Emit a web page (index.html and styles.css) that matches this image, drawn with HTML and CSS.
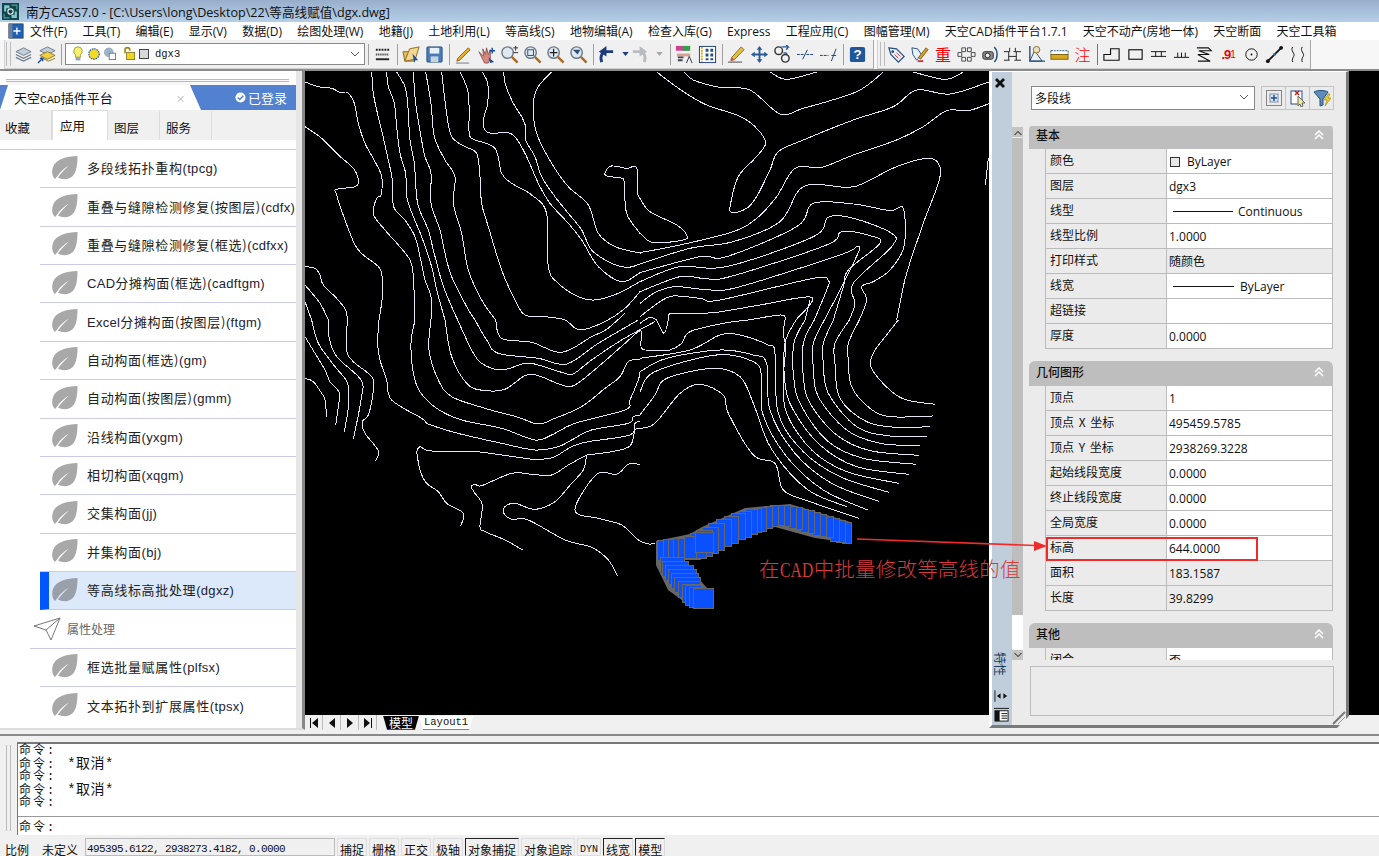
FILE: index.html
```html
<!DOCTYPE html>
<html lang="zh">
<head>
<meta charset="utf-8">
<title>南方CASS7.0</title>
<link rel="stylesheet" href="styles.css">
</head>
<body>
<svg class="defs" width="0" height="0">
  <symbol id="leaf" viewBox="0 0 28 28"><path d="M26.500 1C15 1.500 5 4 2 12c-2 6 0 10 2 12l2.500-3C9 17 13 13.500 18 10.500 14 14 10 18 7 22.500c5 3 13 2 16-3 3-5 3.500-12 3.500-18.500z" fill="currentColor"/></symbol>
  <symbol id="mag" viewBox="0 0 20 20"><circle cx="8" cy="8" r="6" fill="#dfe7f0" stroke="#6a7a8a" stroke-width="1.500"/><path d="M12.500 12.500l6 6" stroke="#a86a20" stroke-width="2.500"/></symbol>
</svg>

<header class="titlebar">
  <svg class="app-logo" viewBox="0 0 16 16"><rect width="16" height="16" fill="#12444c"/><path d="M2 2h5v3H4v3H2zM14 14H9v-3h3V8h2z" fill="#7fc8c8"/><circle cx="8" cy="8" r="2.500" fill="none" stroke="#e8f4f4"/><path d="M9 2h5v4M2 10v4h5" stroke="#4fa0a0" fill="none"/></svg>
  <span>南方CASS7.0 - [C:\Users\long\Desktop\22\等高线赋值\dgx.dwg]</span>
</header>

<nav class="menubar">
  <svg class="menu-logo" viewBox="0 0 18 18"><rect x="1" y="1" width="16" height="16" fill="#1c63b8" stroke="#30455c"/><path d="M10 5v8M6 9h8" stroke="#fff" stroke-width="1.500"/><rect x="1" y="1" width="4" height="16" fill="#6d7f94"/></svg>
  <span>文件(F)</span><span>工具(T)</span><span>编辑(E)</span><span>显示(V)</span><span>数据(D)</span><span>绘图处理(W)</span><span>地籍(J)</span><span>土地利用(L)</span><span>等高线(S)</span><span>地物编辑(A)</span><span>检查入库(G)</span><span>Express</span><span>工程应用(C)</span><span>图幅管理(M)</span><span>天空CAD插件平台1.7.1</span><span>天空不动产(房地一体)</span><span>天空断面</span><span>天空工具箱</span>
</nav>

<div class="toolrow">
  <div class="tb tb-one">
    <i class="grip"></i>
    <b class="ic"><svg viewBox="0 0 20 20"><path d="M10 3l8 4-8 4-8-4z" fill="#c4ced8" stroke="#6c7c8c"/><path d="M2 10l8 4 8-4M2 13l8 4 8-4" fill="none" stroke="#6c7c8c" stroke-width="1.300"/></svg></b>
    <b class="ic"><svg viewBox="0 0 20 20"><path d="M11 2l8 4-8 4-8-4z" fill="#c4ced8" stroke="#6c7c8c"/><path d="M11 7l8 4-8 4-8-4z" fill="#f2d040" stroke="#8c7820"/><path d="M4 13l8 4 7-3" fill="none" stroke="#8c7820"/><path d="M1 19l5-5M3 14h3v3" stroke="#1c4c9c" fill="none" stroke-width="1.400"/></svg></b>
    <i class="sep"></i>
    <div class="layer-combo">
      <svg class="lc" viewBox="0 0 16 20"><path d="M8 1a5.500 5.500 0 0 0-3 10v3h6v-3A5.500 5.500 0 0 0 8 1z" fill="#f8f070" stroke="#8a8a40"/><rect x="5" y="14" width="6" height="4" fill="#9aa4b0"/></svg>
      <svg class="lc" viewBox="0 0 16 20"><circle cx="8" cy="10" r="6.500" fill="#f6d820" stroke="#1c50a8" stroke-width="1.400" stroke-dasharray="2 1"/></svg>
      <svg class="lc" viewBox="0 0 16 20"><circle cx="6.500" cy="8" r="5.500" fill="#9fb4cc" stroke="#7c8ca0" stroke-dasharray="2 1"/><rect x="7" y="9" width="8" height="8" fill="#fff" stroke="#5c6c7c"/></svg>
      <svg class="lc lc-lock" viewBox="0 0 16 20"><path d="M3 9V5a3 3 0 0 1 6 0v1" fill="none" stroke="#a08810" stroke-width="2"/><rect x="5" y="8" width="10" height="9" fill="#f0d820" stroke="#80701c"/></svg>
      <i class="swatch"></i>
      <span class="lc-name">dgx3</span>
      <svg class="chev" viewBox="0 0 10 6"><path d="M1 1l4 4 4-4" fill="none" stroke="#555"/></svg>
    </div>
    <i class="sep"></i>
    <b class="ic"><svg viewBox="0 0 20 20"><path d="M3 5h14" stroke="#222" stroke-dasharray="2 1" stroke-width="2"/><path d="M3 10h14" stroke="#222" stroke-dasharray="1 1" stroke-width="2"/><path d="M3 15h14" stroke="#222" stroke-width="2"/></svg></b>
    <i class="sep"></i>
    <b class="ic"><svg viewBox="0 0 20 20"><path d="M1 7h6l2-2h4v12H3z" fill="#e4bc60" stroke="#8c6c20"/><path d="M3 17L8 4l10-2-4 13z" fill="#f0d890" stroke="#8c6c20"/><path d="M11 9l6 7-3 0-1 3z" fill="#1c4c9c"/></svg></b>
    <b class="ic"><svg viewBox="0 0 20 20"><rect x="2" y="2" width="16" height="16" rx="1" fill="#4a7cb8" stroke="#27517f"/><rect x="5" y="3" width="10" height="6" fill="#e8f0f8"/><rect x="6" y="12" width="8" height="6" fill="#c8d4e0"/></svg></b>
    <i class="sep"></i>
    <b class="ic"><svg viewBox="0 0 20 20"><path d="M4 14L15 3l2 2L6 16l-3 1z" fill="#f0b020" stroke="#8c6010"/><path d="M2 19h14" stroke="#777"/></svg></b>
    <b class="ic"><svg viewBox="0 0 20 20"><path d="M2 7l5 5-1-8 3 6 1-7 2 7 2-5 0 9-2 5H8z" fill="#d88880" stroke="#8c5c58"/><path d="M12 13l6 5-4 1z" fill="#1c4c9c"/><path d="M16 3v6M13 6h6" stroke="#1c4c9c" stroke-width="1.500"/></svg></b>
    <b class="ic"><svg viewBox="0 0 20 20"><use href="#mag"/><path d="M14 3h5M16.500 1v5M14 8h5" stroke="#333"/></svg></b>
    <b class="ic"><svg viewBox="0 0 20 20"><use href="#mag"/><rect x="5" y="5" width="6" height="6" fill="none" stroke="#27517f"/></svg></b>
    <b class="ic"><svg viewBox="0 0 20 20"><use href="#mag"/><path d="M8 4v8M4 8h8" stroke="#222" stroke-width="1.300"/></svg></b>
    <b class="ic"><svg viewBox="0 0 20 20"><use href="#mag"/><path d="M4 5h8l-3 5-2-2z" fill="#27517f"/></svg></b>
    <i class="sep"></i>
    <b class="ic ic-undo"><svg viewBox="0 0 20 20"><path d="M6 18c-2-6 0-11 6-11h6" fill="none" stroke="#1c3c7c" stroke-width="3"/><path d="M11 1L3 7l8 5z" fill="#1c3c7c"/></svg></b>
    <b class="mini mini-a"><svg viewBox="0 0 8 5"><path d="M0 0h8L4 5z" fill="#1c3c7c"/></svg></b>
    <b class="ic"><svg viewBox="0 0 20 20"><path d="M14 18c2-6 0-11-6-11H2" fill="none" stroke="#b8bcc0" stroke-width="3"/><path d="M9 1l8 6-8 5z" fill="#b8bcc0"/></svg></b>
    <b class="mini mini-b"><svg viewBox="0 0 8 5"><path d="M0 0h8L4 5z" fill="#a8a8a8"/></svg></b>
    <i class="sep"></i>
    <b class="ic"><svg viewBox="0 0 20 20"><rect x="1" y="1" width="14" height="5" fill="#d04090"/><rect x="8" y="1" width="8" height="5" fill="#30a050"/><path d="M2 9h14v3H2z" fill="#d8a090"/><path d="M3 13h6M3 16h5" stroke="#445" stroke-width="2"/><path d="M12 19l3-7 3 7" fill="none" stroke="#334"/></svg></b>
    <b class="ic"><svg viewBox="0 0 20 20"><rect x="1.500" y="1.500" width="17" height="17" fill="#fff" stroke="#1c3c7c"/><path d="M4 2v16" stroke="#d8a820" stroke-width="2" stroke-dasharray="2 1"/><path d="M8 4h3v3H8zM13 4h3v3h-3zM8 9h3v3H8zM13 9h3v3h-3zM8 14h3v2H8zM13 14h3v2h-3z" fill="#27517f"/></svg></b>
    <i class="sep"></i>
    <b class="ic"><svg viewBox="0 0 20 20"><path d="M5 13L15 2l3 3L8 15l-4 1z" fill="#e8c040" stroke="#7c6c20"/><path d="M5 13l3 3-4 1z" fill="#d05050"/><path d="M1 18h15" stroke="#444"/></svg></b>
    <b class="ic"><svg viewBox="0 0 20 20"><path d="M10 1l3 4h-2v4h4V7l4 3-4 3v-2h-4v4h2l-3 4-3-4h2v-4H5v2l-4-3 4-3v2h4V5H7z" fill="#2a5c9c"/></svg></b>
    <b class="ic"><svg viewBox="0 0 20 20"><circle cx="6" cy="6" r="4" fill="none" stroke="#333" stroke-width="1.500"/><circle cx="13" cy="14" r="4" fill="none" stroke="#333" stroke-width="1.500"/><path d="M9 2h7l-2-2m2 2l-2 3M11 8l4 1" stroke="#2a5c9c" fill="none" stroke-width="1.500"/></svg></b>
    <b class="ic"><svg viewBox="0 0 20 20"><path d="M1 10h7M11 10h8" stroke="#1c3c7c" stroke-dasharray="3 1"/><path d="M7 15l5-10" stroke="#1c3c7c"/></svg></b>
    <b class="ic"><svg viewBox="0 0 20 20"><path d="M1 11h9" stroke="#1c3c7c" stroke-dasharray="3 1"/><path d="M13 11h5M13 17l5-13" stroke="#1c3c7c"/></svg></b>
    <i class="sep"></i>
    <b class="ic"><svg viewBox="0 0 20 20"><rect x="2" y="2" width="16" height="16" rx="2" fill="#20579c"/><text class="qm" x="10" y="15">?</text></svg></b>
  </div>
  <div class="tb tb-two">
    <i class="grip grip-wide"></i>
    <b class="ic"><svg viewBox="0 0 20 20"><path d="M2 3l8 1 8 8-6 6-8-8z" fill="#e8f0f8" stroke="#27517f" stroke-width="1.300"/><circle cx="6" cy="7" r="1.500" fill="#27517f"/><path d="M8 10l4 4M10 8l4 4" stroke="#c04040"/></svg></b>
    <b class="ic"><svg viewBox="0 0 20 20"><path d="M2 3l6 1 4 6-5 6-4-6z" fill="#e8f0f8" stroke="#27517f"/><path d="M9 13l8-10 2 2-8 10z" fill="#d8a030" stroke="#7c6010"/><path d="M8 17h6" stroke="#c04040" stroke-width="2"/></svg></b>
    <b class="ic ic-red">重</b>
    <b class="ic"><svg viewBox="0 0 20 20"><path d="M5 3h4v4H5zM11 3h4v4h-4zM1 8h4v4H1zM15 8h4v4h-4zM5 13h4v4H5zM11 13h4v4h-4z" fill="#f4f4f4" stroke="#444"/></svg></b>
    <b class="ic"><svg viewBox="0 0 20 20"><rect x="3" y="7" width="11" height="8" rx="2" fill="#888" stroke="#333"/><circle cx="8" cy="11" r="2.500" fill="#eee" stroke="#222"/><path d="M15 2c4 4 4 12 0 16" fill="none" stroke="#27517f" stroke-width="1.500"/></svg></b>
    <b class="ic"><svg viewBox="0 0 20 20"><path d="M1 7h6M11 7h8M6 7v9M14 7v9M6 12h8M1 16h6M12 16h7M7 3v4M13 3v4" stroke="#222" fill="none"/></svg></b>
    <b class="ic"><svg viewBox="0 0 20 20"><path d="M3 1v16h16" fill="none" stroke="#27517f" stroke-width="1.500"/><path d="M3 17L16 17 8 6z" fill="none" stroke="#27517f"/><circle cx="10" cy="5" r="3.500" fill="#e8e0c0" stroke="#8a6c30"/></svg></b>
    <b class="ic"><svg viewBox="0 0 20 20"><rect x="1" y="6" width="18" height="4" fill="#fff" stroke="#27517f" stroke-dasharray="2 1"/><rect x="1" y="10" width="18" height="5" fill="#d8a820" stroke="#7c6010"/></svg></b>
    <b class="ic ic-red ic-thin">注</b>
    <i class="sep sep-dark"></i>
    <b class="ic"><svg viewBox="0 0 20 20"><path d="M2 16V10h7V4h9v12z" fill="none" stroke="#111" stroke-width="1.200"/></svg></b>
    <b class="ic"><svg viewBox="0 0 20 20"><rect x="3" y="5" width="14" height="10" fill="none" stroke="#111" stroke-width="1.200"/></svg></b>
    <b class="ic"><svg viewBox="0 0 20 20"><path d="M2 7h16M2 12h16M7 7v5M13 7v5" stroke="#111" fill="none"/></svg></b>
    <b class="ic"><svg viewBox="0 0 20 20"><path d="M2 13h16M6 8v5M10 8v5M14 8v5" stroke="#111" fill="none"/></svg></b>
    <b class="ic"><svg viewBox="0 0 20 20"><path d="M2 3h12l3 3H4l11 4H3l13 7H3" stroke="#111" fill="none" stroke-width="1.200"/></svg></b>
    <b class="ic ic-num">.9<small>1</small></b>
    <b class="ic"><svg viewBox="0 0 20 20"><circle cx="10" cy="10" r="6" fill="none" stroke="#111"/><circle cx="10" cy="10" r="1" fill="#111"/></svg></b>
    <b class="ic"><svg viewBox="0 0 20 20"><path d="M3 17L17 3" stroke="#111" stroke-width="2"/><circle cx="3" cy="17" r="2" fill="#111"/><circle cx="17" cy="3" r="2" fill="#111"/><circle cx="10" cy="10" r="1.500" fill="#2a6ca8"/></svg></b>
    <b class="ic"><svg viewBox="0 0 20 20"><path d="M5 2C2 6 8 9 6 12c-1 2-2 3-1 6M15 2c-3 4 3 7 1 10-1 2-2 3-1 6" fill="none" stroke="#111"/></svg></b>
  </div>
</div>

<main class="workspace">
  <aside class="plugin">
    <div class="plugin-grip"></div>
    <div class="plugin-head">
      <div class="plugin-tab"><span class="pt-name">天空<em>CAD</em>插件平台</span><span class="pt-x">✕</span></div>
      <div class="logged"><svg viewBox="0 0 12 12"><circle cx="6" cy="6" r="5.500" fill="#fff"/><path d="M3 6l2.200 2.200L9 4.200" fill="none" stroke="#5181cf" stroke-width="1.600"/></svg>已登录</div>
    </div>
    <div class="plugin-tabs"><span>收藏</span><span class="on">应用</span><span>图层</span><span>服务</span></div>
    <ul class="tools">
      <li class="tool"><svg class="leaf"><use href="#leaf"/></svg><span>多段线拓扑重构<u>(tpcg)</u></span></li>
      <li class="tool"><svg class="leaf"><use href="#leaf"/></svg><span>重叠与缝隙检测修复(按图层)<u>(cdfx)</u></span></li>
      <li class="tool"><svg class="leaf"><use href="#leaf"/></svg><span>重叠与缝隙检测修复(框选)<u>(cdfxx)</u></span></li>
      <li class="tool"><svg class="leaf"><use href="#leaf"/></svg><span><u>CAD</u>分摊构面(框选)<u>(cadftgm)</u></span></li>
      <li class="tool"><svg class="leaf"><use href="#leaf"/></svg><span><u>Excel</u>分摊构面(按图层)<u>(ftgm)</u></span></li>
      <li class="tool"><svg class="leaf"><use href="#leaf"/></svg><span>自动构面(框选)<u>(gm)</u></span></li>
      <li class="tool"><svg class="leaf"><use href="#leaf"/></svg><span>自动构面(按图层)<u>(gmm)</u></span></li>
      <li class="tool"><svg class="leaf"><use href="#leaf"/></svg><span>沿线构面<u>(yxgm)</u></span></li>
      <li class="tool"><svg class="leaf"><use href="#leaf"/></svg><span>相切构面<u>(xqgm)</u></span></li>
      <li class="tool"><svg class="leaf"><use href="#leaf"/></svg><span>交集构面<u>(jj)</u></span></li>
      <li class="tool"><svg class="leaf"><use href="#leaf"/></svg><span>并集构面<u>(bj)</u></span></li>
      <li class="tool tool-on"><svg class="leaf"><use href="#leaf"/></svg><span>等高线标高批处理<u>(dgxz)</u></span></li>
      <li class="group"><svg class="plane" viewBox="0 0 28 24"><path d="M1 9L27 1 18 23 13 13zM13 13L27 1" fill="none" stroke="#777"/></svg><span>属性处理</span></li>
      <li class="tool"><svg class="leaf"><use href="#leaf"/></svg><span>框选批量赋属性<u>(plfsx)</u></span></li>
      <li class="tool tool-last"><svg class="leaf"><use href="#leaf"/></svg><span>文本拓扑到扩展属性<u>(tpsx)</u></span></li>
    </ul>
  </aside>

  <section class="drawing">
    <div class="canvas">
      <svg class="contours" viewBox="305 71 1074 644" width="1074" height="644">
        <g class="q8" transform="translate(305 70) scale(.3333)">
          <polyline points="0,36 40,50 80,55 105,67 128,68 148,100 160,160 180,220 210,275 230,320 228,375 215,385 205,432 240,480 280,525 315,570 325,620 330,750"/>
          <polyline points="0,170 50,205 100,255 145,295 160,330 150,350 95,358 95,375 120,450 150,525 175,555 215,585 230,610 232,680 222,750"/>
          <polyline points="0,590 30,595 45,615 55,645 95,685 122,720 127,750"/>
          <polyline points="0,645 45,700 70,750"/>
          <polyline points="0,695 20,750"/>
          <polyline points="200,6 205,70 215,120 232,190 250,270 262,330 266,410 300,450 330,500 345,560 360,630 378,680 378,750"/>
          <polyline points="245,6 250,50 268,100 275,170 285,250 302,310 305,380 325,440 350,500 380,590 395,660 420,750"/>
          <polyline points="275,6 300,50 308,100 315,210 328,280 338,400 370,480 385,540 412,640 440,710 458,750"/>
          <polyline points="325,6 332,100 348,200 360,260 378,310 378,400 405,480 420,550 440,620 485,710 510,750"/>
          <polyline points="362,6 378,100 388,200 420,270 450,320 445,400 470,490 490,600 530,690 572,750"/>
          <polyline points="410,6 425,130 440,200 480,230 515,250 525,320 530,400 550,470 590,600 630,690 660,735 720,740 780,750 825,780 900,755 960,715 1005,665"/>
          <polyline points="465,6 490,70 492,180 495,200 510,210 570,235 590,310 620,340 680,375 725,430 730,590 760,640 820,680 870,690 940,670 1005,635"/>
          <polyline points="532,6 548,40 548,100 535,150 540,180 560,190 620,192 660,250 700,340 735,400 790,460 830,510 880,590 950,635 1005,608"/>
          <polyline points="597,6 600,40 625,100 650,140 662,170 662,210 690,260 710,320 750,380 790,430 830,480 860,540 920,580 970,592 1005,582"/>
          <polyline points="740,6 700,50 685,100 695,190 740,280 790,350 850,405 880,490 930,530 1000,548 1005,548"/>
          <polyline points="1005,490 965,430 958,340 950,325 905,318 902,305 920,288 965,295 995,293 998,370 1005,385"/>
        </g>
        <g class="q9" transform="translate(640 70) scale(.3333)">
          <polyline points="50,6 130,65 200,105 290,135 340,165 375,210 370,235 340,270 295,320 272,400 275,428 320,415 350,380 390,300 415,245 490,210 640,150 760,110 830,60 930,72 1050,35 1100,20"/>
          <polyline points="133,6 160,30 240,52 330,60 420,132 490,115 650,65 730,6"/>
          <polyline points="390,6 440,28 530,6"/>
          <polyline points="820,6 915,28 970,6"/>
          <polyline points="0,385 30,425 110,465 140,495 130,510 40,518 0,490"/>
          <polyline points="0,548 120,525 280,485 350,445 410,380 465,295 545,292 640,255 770,210 850,170 920,122 985,122 1050,100"/>
          <polyline points="0,582 150,535 280,515 420,455 490,350 620,352 670,340 770,290 860,265 895,280 898,330 850,460 800,610 780,700 770,750"/>
          <polyline points="0,608 180,560 260,560 470,470 520,400 640,402 750,422 790,415 792,530 750,600 700,635 665,650 680,690 658,750"/>
          <polyline points="0,635 120,590 260,590 520,500 565,442 640,445 755,490 755,530 640,640 645,700 628,750"/>
          <polyline points="0,665 120,620 190,625 270,620 560,525 605,485 690,497 720,520 625,600 610,650 580,750"/>
          <polyline points="0,700 50,665 110,650 210,660 300,650 600,555 650,530 658,540 620,620 590,680 553,750"/>
          <polyline points="0,740 60,695 100,678 180,685 240,690 520,625 565,632 560,660 523,750"/>
          <polyline points="85,750 85,740 100,730 220,728 360,705 515,682 468,750"/>
          <polyline points="510,690 495,750"/>
          <polyline points="0,760 30,742 50,750"/>
          <polyline points="325,750 420,735 437,745 435,750"/>
          <polyline points="1045,265 1036,345"/>
        </g>
        <g class="q10" transform="translate(305 320) scale(.3333)">
          <polyline points="0,50 30,100 60,150 75,185 103,218 100,260 92,315"/>
          <polyline points="20,0 40,70 90,140 128,190 130,260 118,335"/>
          <polyline points="70,0 72,50 95,110 168,180 168,240 145,358"/>
          <polyline points="127,0 125,90 145,125 200,170 205,210 190,285 172,305 180,340 220,392 212,422"/>
          <polyline points="0,175 25,185 50,220 60,240 65,290"/>
          <polyline points="222,0 218,70 225,120 245,180 260,240 350,295 370,312 440,335 500,350 590,370 690,390 760,380 800,360 860,330 970,310 985,290 1005,285"/>
          <polyline points="330,0 318,70 325,160 345,215 395,265 470,300 590,325 690,360 740,345 810,310 960,270 975,240 1000,180 1005,155"/>
          <polyline points="378,0 372,90 400,180 440,230 540,265 640,292 700,312 750,295 830,260 900,205 945,170 970,125 1005,117"/>
          <polyline points="420,0 440,110 490,195 545,212 600,208 660,167 700,167 770,195 810,195 880,140 960,70 1000,35 1010,40 1010,85 1050,92"/>
          <polyline points="458,0 500,90 530,130 590,150 660,130 700,135 780,160 805,162 860,120 950,60 1050,5"/>
          <polyline points="510,0 545,60 580,100 700,115 785,132 880,70 1000,0"/>
          <polyline points="572,0 590,55 680,67 770,97 860,50 905,28 960,-20"/>
          <polyline points="335,395 345,380 370,392 440,395 515,395 640,412 690,418 745,412 800,380 850,365 975,345 990,310 1005,305"/>
          <polyline points="335,395 345,450 365,490 400,515 425,550 475,580 467,618"/>
          <polyline points="845,405 920,395 975,378 990,330 1005,325"/>
          <polyline points="845,405 835,450 800,490 750,545 690,568 630,550 600,560 597,580 620,598 670,600 780,660 860,682 910,720 937,767"/>
          <polyline points="497,500 510,492 530,497 620,460 680,463 740,465 790,435 845,405"/>
          <polyline points="497,500 510,520 532,555 525,620 540,635 600,660 653,690"/>
          <polyline points="1005,433 970,433 935,463 875,463 810,570 880,595 950,615 1000,660 1030,672 1050,670"/>
        </g>
        <g class="q11" transform="translate(640 320) scale(.3333)">
          <polyline points="50,0 72,40 85,0"/>
          <polyline points="45,92 90,90 125,70 150,35 250,10 325,0"/>
          <polyline points="775,0 740,45 700,100 697,150 780,232 885,253"/>
          <polyline points="658,0 625,70 625,120 635,200 690,265 750,290 878,288"/>
          <polyline points="628,0 585,70 585,130 600,235 680,305 770,322 870,320"/>
          <polyline points="580,0 550,70 550,130 565,220 650,320 750,348 860,350"/>
          <polyline points="553,0 520,70 520,140 535,230 620,330 720,370 840,377"/>
          <polyline points="523,0 490,70 490,170 510,250 590,345 690,392 836,406"/>
          <polyline points="495,0 462,70 462,180 485,260 565,365 670,415 828,433"/>
          <polyline points="468,0 435,70 435,190 460,270 540,375 650,440 806,463"/>
          <polyline points="435,0 430,40 437,85 430,180 440,280 515,390 620,455 776,490"/>
          <polyline points="0,115 150,90 240,45 300,45 385,75 405,100 415,280 490,395 600,470 746,517"/>
          <polyline points="0,155 80,115 240,90 340,105 380,130 390,270 465,400 575,490 716,544"/>
          <polyline points="0,215 45,155 230,105 340,125 365,170 368,280 440,410 550,510 683,570"/>
          <polyline points="0,285 45,225 80,175 220,145 300,170 340,250 385,370 450,460 520,520 620,560"/>
          <polyline points="0,325 45,310 120,220 180,193 250,225 265,280 340,405 405,430 430,510 510,545 657,595"/>
        </g>
        <polygon class="band-shadow" points="656,541 690,534 702,527 745,508 790,504 850,522 850,543 815,538 775,527 745,536 715,552 700,560 680,560 700,580 714,596 714,608 690,606 668,590 656,565"/>
        <g class="band">
          <rect x="842" y="522" width="9" height="21"/><rect x="836" y="520" width="9" height="22"/><rect x="830" y="518" width="9" height="23"/><rect x="824" y="516" width="9" height="21"/><rect x="818" y="514" width="8" height="22"/><rect x="812" y="512" width="8" height="23"/><rect x="806" y="510" width="8" height="23"/><rect x="800" y="509" width="8" height="23"/><rect x="794" y="507" width="8" height="22"/><rect x="788" y="506" width="8" height="22"/><rect x="782" y="505" width="8" height="21"/><rect x="776" y="505" width="8" height="20"/><rect x="770" y="505" width="8" height="21"/><rect x="764" y="506" width="8" height="22"/><rect x="758" y="507" width="8" height="24"/><rect x="752" y="508" width="9" height="24"/><rect x="745" y="509" width="12" height="25"/><rect x="738" y="511" width="13" height="26"/><rect x="731" y="513" width="14" height="26"/><rect x="724" y="516" width="14" height="27"/><rect x="716" y="519" width="15" height="27"/><rect x="708" y="523" width="16" height="27"/><rect x="702" y="527" width="16" height="26"/><rect x="696" y="530" width="16" height="26"/><rect x="690" y="533" width="16" height="25"/>
          <rect x="657" y="540" width="10" height="20"/><rect x="663" y="539" width="10" height="22"/><rect x="668" y="539" width="10" height="22"/><rect x="673" y="538" width="10" height="21"/><rect x="678" y="538" width="10" height="20"/><rect x="684" y="536" width="12" height="22"/>
          <rect x="695" y="532" width="18" height="20"/>
          <rect x="660" y="557" width="24" height="16"/><rect x="662" y="561" width="26" height="15"/><rect x="665" y="565" width="28" height="15"/><rect x="668" y="569" width="28" height="15"/><rect x="671" y="573" width="27" height="15"/><rect x="674" y="577" width="26" height="15"/><rect x="678" y="581" width="22" height="16"/><rect x="682" y="584" width="18" height="18"/><rect x="685" y="585" width="16" height="20"/><rect x="689" y="587" width="14" height="20"/>
          <rect x="693" y="588" width="20" height="20"/>
        </g>
      </svg>
    </div>
    <div class="layout-tabs">
      <div class="nav-btns">
        <b><svg viewBox="0 0 8 10"><path d="M0 0h1v10H0zM8 0v10L2 5z"/></svg></b>
        <b><svg viewBox="0 0 8 10"><path d="M7 0v10L1 5z"/></svg></b>
        <b><svg viewBox="0 0 8 10"><path d="M1 0v10l6-5z"/></svg></b>
        <b><svg viewBox="0 0 8 10"><path d="M7 0h1v10H7zM0 0v10l6-5z"/></svg></b>
      </div>
      <span class="ltab ltab-on">模型</span><span class="ltab">Layout1</span>
    </div>

    <aside class="props">
      <div class="props-strip">
        <svg class="px" viewBox="0 0 12 12"><path d="M1 3L3 1l3 3 3-3 2 2-3 3 3 3-2 2-3-3-3 3-2-2 3-3z" fill="#111"/></svg>
        <span class="strip-title">特性</span>
        <svg class="si si-a" viewBox="0 0 16 12"><path d="M1 0v12" stroke="#111"/><path d="M7 3v6L3 6zM10 3v6l4-3z" fill="#111"/></svg>
        <svg class="si si-b" viewBox="0 0 16 14"><path d="M0 .5h16" stroke="#111"/><rect x="1" y="3" width="14" height="11" fill="#fff" stroke="#111"/><rect x="1" y="3" width="5" height="11" fill="#111"/><path d="M8 6h6M8 8.500h6M8 11h6" stroke="#111"/></svg>
      </div>
      <div class="props-body">
        <div class="props-top">
          <div class="type-combo"><span>多段线</span><svg class="chev" viewBox="0 0 10 6"><path d="M1 1l4 4 4-4" fill="none" stroke="#555"/></svg></div>
          <div class="top-btns">
            <b><svg viewBox="0 0 18 18"><rect x="1.500" y="1.500" width="15" height="15" fill="none" stroke="#222" stroke-dasharray="1 1"/><rect x="5" y="5" width="8" height="8" fill="#dfe9f6" stroke="#7a8ea6"/><path d="M9 6v6M6 9h6" stroke="#1c4c9c" stroke-width="1.500"/></svg></b>
            <b><svg viewBox="0 0 18 18"><rect x="2" y="2" width="11" height="13" fill="#fff" stroke="#27517f"/><path d="M6 2l4 4M10 2L6 6" stroke="#d02020" stroke-width="1.500"/><path d="M9 7l7 7-3 0 1 3-2 1-1-3-2 2z" fill="#f4e890" stroke="#666"/></svg></b>
            <b><svg viewBox="0 0 18 18"><path d="M1 3c3-2 11-2 14 0L10 10v6l-3 1V10z" fill="#5f8cb8" stroke="#27517f"/><path d="M15 5l-4 6h3l-2 6 6-8h-3l2-4z" fill="#f0d020" stroke="#807010" stroke-width=".5"/></svg></b>
          </div>
        </div>
        <div class="props-main">
          <div class="scrollbar">
            <b class="sb-up"><svg viewBox="0 0 8 5"><path d="M0 5l4-4 4 4-1 0-3-3-3 3z" fill="#111"/></svg></b>
            <i class="sb-thumb"></i>
            <i class="sb-rest"></i>
            <b class="sb-dn"><svg viewBox="0 0 8 5"><path d="M0 0l4 4 4-4-1 0-3 3-3-3z" fill="#111"/></svg></b>
          </div>
          <div class="sections">
            <section class="sec">
              <div class="sec-h"><span>基本</span><svg viewBox="0 0 10 10"><path d="M1 5l4-4 4 4M1 9l4-4 4 4" fill="none" stroke="#fff" stroke-width="1.500"/></svg></div>
              <div class="row"><div class="k">颜色</div><div class="v"><i class="sq"></i>ByLayer</div></div>
              <div class="row"><div class="k">图层</div><div class="v">dgx3</div></div>
              <div class="row"><div class="k">线型</div><div class="v"><i class="ln ln-a"></i>Continuous</div></div>
              <div class="row"><div class="k">线型比例</div><div class="v">1.0000</div></div>
              <div class="row"><div class="k">打印样式</div><div class="v ro">随颜色</div></div>
              <div class="row"><div class="k">线宽</div><div class="v"><i class="ln"></i>ByLayer</div></div>
              <div class="row"><div class="k">超链接</div><div class="v"></div></div>
              <div class="row"><div class="k">厚度</div><div class="v">0.0000</div></div>
            </section>
            <section class="sec">
              <div class="sec-h"><span>几何图形</span><svg viewBox="0 0 10 10"><path d="M1 5l4-4 4 4M1 9l4-4 4 4" fill="none" stroke="#fff" stroke-width="1.500"/></svg></div>
              <div class="row"><div class="k">顶点</div><div class="v">1</div></div>
              <div class="row"><div class="k">顶点 X 坐标</div><div class="v">495459.5785</div></div>
              <div class="row"><div class="k">顶点 Y 坐标</div><div class="v">2938269.3228</div></div>
              <div class="row"><div class="k">起始线段宽度</div><div class="v">0.0000</div></div>
              <div class="row"><div class="k">终止线段宽度</div><div class="v">0.0000</div></div>
              <div class="row"><div class="k">全局宽度</div><div class="v">0.0000</div></div>
              <div class="row"><div class="k">标高</div><div class="v">644.0000</div></div>
              <div class="row"><div class="k">面积</div><div class="v ro">183.1587</div></div>
              <div class="row"><div class="k">长度</div><div class="v ro">39.8299</div></div>
            </section>
            <section class="sec">
              <div class="sec-h"><span>其他</span><svg viewBox="0 0 10 10"><path d="M1 5l4-4 4 4M1 9l4-4 4 4" fill="none" stroke="#fff" stroke-width="1.500"/></svg></div>
              <div class="row"><div class="k">闭合</div><div class="v">否</div></div>
            </section>
          </div>
        </div>
        <div class="desc"></div>
      </div>
      <svg class="corner" viewBox="0 0 14 14"><path d="M13 1L1 13" stroke="#777" stroke-width="2"/><path d="M13 6l-7 7" stroke="#999"/></svg>
    </aside>

    <svg class="annot-arrow" viewBox="0 0 190 14" width="190" height="14"><path d="M0 1L178 7.500" stroke="#ee2c2c" stroke-width="1.600"/><path d="M177 3l13 5-13 5z" fill="#ee2c2c"/></svg>
    <div class="annot-box"></div>
    <div class="annot-text">在<em>CAD</em>中批量修改等高线的值</div>
  </section>
</main>

<div class="hsplit"></div>

<section class="cmd">
  <i class="cmd-grip"></i>
  <div class="cmd-box">
    <div class="cmd-log">
      <p>命令:</p>
      <p>命令:<span>*取消*</span></p>
      <p>命令:</p>
      <p>命令:<span>*取消*</span></p>
      <p>命令:</p>
    </div>
    <div class="cmd-input"><p>命令:</p></div>
  </div>
</section>

<footer class="status">
  <span class="st st-a">比例</span>
  <span class="st st-b">未定义</span>
  <span class="coords">495395.6122, 2938273.4182, 0.0000</span>
  <span class="sb">捕捉</span><span class="sb">栅格</span><span class="sb">正交</span><span class="sb">极轴</span><span class="sb sb-on">对象捕捉</span><span class="sb">对象追踪</span><span class="sb sb-mono">DYN</span><span class="sb sb-on">线宽</span><span class="sb sb-on">模型</span>
</footer>
<script src="script.js"></script>
</body>
</html>
```
FILE: styles.css
```css
* { box-sizing: border-box; }
html, body { margin: 0; padding: 0; }
body {
  width: 1379px; height: 856px; overflow: hidden; background: #f0f0f0;
  font: 12px "Open Sans", "Noto Sans CJK SC", sans-serif; color: #111;
  display: flex; flex-direction: column;
}
.defs { position: absolute; }
b, i, em, u { font-style: normal; font-weight: normal; text-decoration: none; }

/* title + menu */
.titlebar {
  height: 22px; flex: none; display: flex; align-items: center; gap: 10px; padding-left: 0;
  background: linear-gradient(#97afcb, #b6cfe8); font-size: 12.600px; color: #111; white-space: nowrap;
}
.app-logo { width: 17px; height: 17px; margin-left: 2px; margin-right: -3px; }
.menubar {
  height: 18px; flex: none; background: #fff; display: flex; align-items: center; gap: 15.300px;
  white-space: nowrap; font-size: 12px; padding-left: 7px;
}
.menu-logo { width: 18px; height: 16px; margin-right: -10.300px; }

/* toolbars */
.toolrow {
  height: 31px; flex: none; display: flex; gap: 3px; padding-left: 4px; background: #f7f7f7;
  border-bottom: 2px solid #8c8c8c;
}
.tb { height: 29px; display: flex; align-items: center; background: #f0f0f0; border: 1px solid #d0d0d0; border-top: 0; border-right-color: #a8a8a8; }
.tb-one { width: 870px; }
.tb-two { width: 434px; }
.tb-two .ic { width: 23.250px; }
.grip { width: 5px; height: 24px; margin: 0 1px; border-left: 1px solid #bbb; border-right: 1px solid #bbb; flex: none; }
.grip-wide { margin: 0 0 0 2px; }
.sep { width: 1px; height: 21px; background: #a0a0a0; margin: 0 2.500px; flex: none; }
.sep-dark { background: #777; }
.ic { width: 23px; height: 23px; display: flex; align-items: center; justify-content: center; flex: none; }
.ic svg { width: 19px; height: 19px; }
.ic-undo { margin-left: -2px; }
.mini { width: 8px; display: flex; flex: none; }
.mini-a { margin: 0 -1px 0 5px; }
.mini-b { margin: 0 3px 0 4px; }
.mini svg { width: 7px; height: 4px; }
.qm { font: bold 14px "Liberation Sans", sans-serif; fill: #fff; text-anchor: middle; }
.ic-red { color: #f00; font-size: 16px; font-family: "Noto Sans CJK SC", sans-serif; }
.ic-thin { font-weight: 300; }
.ic-num { color: #e00; font: bold 13px "Liberation Sans", sans-serif; letter-spacing: -1px; }
.ic-num small { font-size: 10px; font-weight: normal; }

.layer-combo {
  width: 300px; height: 22px; background: #fff; border: 1px solid #888; display: flex; align-items: center;
  padding: 0 4px 0 5px; margin-left: 1px; flex: none;
}
.lc { width: 14px; height: 16px; margin-right: 2px; flex: none; }
.lc-lock { margin-left: 3px; }
.swatch { width: 10px; height: 10px; background: #d8d8d8; border: 1px solid #444; margin-left: 1px; }
.lc-name { font: 10.500px "Liberation Mono", monospace; margin-left: 6px; flex: 1; }
.chev { width: 10px; height: 6px; flex: none; }

/* workspace */
.workspace { height: 659px; flex: none; display: flex; }
.plugin { width: 305px; flex: none; background: #fff; border-right: 3px solid #888; box-shadow: inset -6px 0 0 #e6e6e6; display: flex; flex-direction: column; border-bottom: 2px solid #ddd; overflow: hidden; }
.plugin-grip { flex: none; margin: 8px 13px 0 6px; border-top: 3px double #bbb; background: #f7f7f7; height: 6px; }
.plugin-head { height: 25px; margin-right: 6px; background: #5181cf; flex: none; display: flex; justify-content: space-between; align-items: center; }
.plugin-tab {
  width: 201px; height: 25px; padding: 0 16px 0 14px; background: #fff; display: flex; justify-content: space-between; align-items: center;
  clip-path: polygon(0 100%, 8px 0, 190px 0, 201px 100%);
  font-family: "Noto Sans CJK SC", sans-serif; font-size: 13px;
}
.plugin-tab em { font-family: "Liberation Mono", monospace; font-size: 11.500px; }
.pt-x { color: #ccc; font-size: 11px; }
.logged { display: flex; align-items: center; gap: 2px; color: #fff; font-size: 13px; font-family: "Noto Sans CJK SC", sans-serif; padding-right: 9px; }
.logged svg { width: 11px; height: 11px; }
.plugin-tabs { height: 30px; margin-right: 6px; flex: none; display: flex; background: #f0f0f0; font-family: "Noto Sans CJK SC", sans-serif; font-size: 12.500px; }
.plugin-tabs span { width: 52px; padding: 6px 0 0 5px; border-right: 1px solid #ddd; border-top: 2px solid #f0f0f0; }
.plugin-tabs span:nth-child(n+3) { padding-left: 6px; }
.plugin-tabs .on { width: 56px; background: #fff; border-top: 1px solid #ddd; border-left: 1px solid #ddd; padding: 5px 0 0 7px; }
.tools { list-style: none; margin: 9px 6px 0 0; padding: 0; flex: 1; overflow: hidden; border-top: 1px solid #c9c9ea; }
.tool, .group { height: 38.360px; display: flex; align-items: center; font-family: "Noto Sans CJK SC", sans-serif; white-space: nowrap; position: relative; }
.tool { margin-left: 40px; padding-left: 11px; border-bottom: 1px solid #c9c9ea; font-size: 13px; letter-spacing: .65px; color: #222; }
.tool span { margin-top: -2px; }
.tool u { font-family: "Liberation Sans", sans-serif; letter-spacing: .3px; color: #223; }
.tool-on { background: #dce9fb; border-left: 9px solid #0055ff; padding-left: 2px; }
.tool-last { border-bottom: 0; }
.leaf { width: 28px; height: 28px; color: #a8a8a8; margin-right: 8px; flex: none; }
.tool-on .leaf { color: #9aa0aa; }
.group { margin-left: 30px; padding-left: 3px; border-bottom: 1px solid #c9c9ea; color: #666; font-size: 12px; }
.plane { width: 28px; height: 24px; margin-right: 6px; }

.drawing { position: relative; width: 1074px; flex: none; }
.canvas { height: 644px; background: #000; overflow: hidden; }
.contours { display: block; }
.contours polyline, .contours path { fill: none; stroke: #e8e4f6; stroke-width: 1; vector-effect: non-scaling-stroke; shape-rendering: crispEdges; }
.band-shadow { fill: #666; }
.band rect { fill: #0a50ff; stroke: #666; stroke-width: 1; shape-rendering: crispEdges; }

.layout-tabs { height: 15px; background: #f0f0f0; display: flex; align-items: center; padding-left: 0; }
.nav-btns { display: flex; width: 76px; }
.nav-btns b { width: 18px; height: 15px; display: flex; align-items: center; justify-content: center; border-right: 1px solid #bbb; }
.nav-btns svg { width: 8px; height: 10px; fill: #111; }
.ltab { height: 14px; padding: 0 5px; font: 10.500px/13px "Liberation Mono", "Noto Sans CJK SC", monospace; clip-path: polygon(0 0, 100% 0, calc(100% - 4px) 100%, 4px 100%); background: #fff; border-bottom: 1px solid #111; }
.ltab-on { background: #000; color: #fff; font-family: "Noto Sans CJK SC", sans-serif; font-size: 12px; padding: 0 6px; margin-left: 2px; }

/* properties palette */
.props {
  position: absolute; left: 684px; top: 0; width: 360px; height: 657px; display: flex;
  background: #ebebeb; border: 1px solid #fff; border-left-width: 3px; border-right: 3px solid #7a7a7a; border-bottom: 3px solid #7a7a7a; clip-path: polygon(0 0, 100% 0, 100% calc(100% - 12px), calc(100% - 12px) 100%, 0 100%);
  box-shadow: inset 1px 0 #ddd;
}
.props-strip { width: 20px; flex: none; background: #c0cedc; position: relative; display: flex; flex-direction: column; align-items: center; }
.px { width: 12px; height: 12px; margin-top: 5px; margin-left: -4px; }
.strip-title { position: absolute; left: 0; top: 580px; writing-mode: vertical-rl; text-orientation: sideways; font-family: "Noto Sans CJK SC", sans-serif; font-size: 12px; line-height: 16px; color: #1c3c5c; }
.si { position: absolute; left: 2px; width: 15px; }
.si-a { top: 618px; height: 12px; }
.si-b { top: 635px; height: 15px; }
.props-body { flex: 1; display: flex; flex-direction: column; min-width: 0; }
.props-top { height: 54px; flex: none; display: flex; padding: 14px 0 0 19px; }
.type-combo { width: 224px; height: 24px; background: #fff; border: 1px solid #888; display: flex; align-items: center; justify-content: space-between; padding: 0 5px 2px 3px; font-family: "Noto Sans CJK SC", sans-serif; }
.top-btns { display: flex; margin-left: 6px; height: 24px; }
.top-btns b { width: 25px; height: 24px; border: 1px solid #c4c4c4; display: flex; align-items: center; justify-content: center; margin-right: -1px; }
.top-btns svg { width: 18px; height: 18px; }
.props-main { height: 534px; flex: none; display: flex; overflow: hidden; }
.scrollbar { width: 11px; flex: none; display: flex; flex-direction: column; background: #fff; margin-top: 1px; height: 533px; }
.scrollbar b { height: 10px; background: #c4c4c4; display: flex; align-items: center; justify-content: center; flex: none; }
.scrollbar b svg { width: 8px; height: 5px; }
.sb-thumb { height: 478px; background: #bebebe; border-top: 1px solid #ebebeb; flex: none; }
.sb-rest { flex: 1; }
.sections { width: 304px; margin-left: 6px; flex: none; }
.sec { margin-bottom: 12px; }
.sec:first-child { margin-top: -2px; }
.sec-h { height: 25px; background: #bebebe; border-radius: 6px 6px 0 0; display: flex; justify-content: space-between; align-items: center; padding: 0 9px 5px 7px; font-family: "Noto Sans CJK SC", sans-serif; font-weight: 500; }
.sec-h svg { width: 10px; height: 10px; margin-top: 2px; }
.row { height: 25px; display: flex; margin-left: 16px; border-right: 1px solid #bbb; border-bottom: 1px solid #bbb; }
.k { width: 122px; flex: none; padding: 2px 0 0 4px; border-left: 1px solid #bbb; border-right: 1px solid #bbb; font-family: "Noto Sans CJK SC", sans-serif; line-height: 17px; white-space: nowrap; word-spacing: 2px; }
.v { flex: 1; background: #fff; padding: 4px 0 0 2px; line-height: 18px; display: flex; align-items: flex-start; white-space: nowrap; font-family: "Open Sans", "Noto Sans CJK SC", sans-serif; }
.v.ro { background: #ebebeb; }
.sq { width: 10px; height: 10px; border: 1px solid #333; background: #e8e8e8; margin: 4px 7px 0 1px; flex: none; }
.ln { width: 61px; height: 1px; background: #111; margin: 8px 6px 0 4px; flex: none; }
.ln-a { width: 60px; margin-right: 5px; }
.desc { width: 304px; height: 50px; margin: 6px 0 0 18px; border: 1px solid #bdbdbd; flex: none; }
.corner { position: absolute; right: 0; bottom: 0; width: 14px; height: 14px; }

/* annotations */
.annot-arrow { position: absolute; left: 552px; top: 467px; }
.annot-box { position: absolute; left: 741px; top: 466px; width: 212px; height: 24px; border: 2px solid #ee2c2c; }
.annot-text { position: absolute; left: 454px; top: 483px; color: #d83a3a; font: 20.500px/28px "Noto Sans CJK SC", serif; font-weight: 300; white-space: nowrap; letter-spacing: .2px; }
.annot-text em { display: inline-block; font: 21px/21px "Liberation Serif", serif; transform: scaleX(.74); transform-origin: 0 50%; margin-right: -11px; }

/* command */
.hsplit { height: 12px; flex: none; background: linear-gradient(#f0f0f0 0 4px, #8a8a8a 4px 6px, #f0f0f0 6px); }
.cmd { height: 93px; flex: none; display: flex; padding-left: 6px; }
.cmd-grip { width: 5px; height: 86px; margin: 3px 6px 0 0; border-left: 1px solid #bbb; border-right: 1px solid #bbb; }
.cmd-box { flex: 1; background: #fff; border-top: 2px solid #777; border-left: 1px solid #777; display: flex; flex-direction: column; }
.cmd p { margin: 0; height: 13px; font: 12px/13px "Liberation Mono", "Noto Sans CJK SC", monospace; letter-spacing: 2px; padding-left: 1px; white-space: pre; }
.cmd p span { margin-left: 11px; font-size: 14px; letter-spacing: .5px; }
.cmd-log { height: 73px; padding-top: 1px; border-bottom: 1px solid #999; }
.cmd-input { padding-top: 5px; }

/* status */
.status { margin-top: 3px; height: 18px; flex: none; display: flex; align-items: flex-start; font-family: "Noto Sans CJK SC", sans-serif; position: relative; white-space: nowrap; }
.st { padding-top: 3px; line-height: 18px; }
.st-a { margin-left: 5px; width: 37px; }
.st-b { width: 43px; }
.coords { width: 250px; height: 18px; margin-right: 2px; border: 1px solid #bbb; font: 11px/21px "Liberation Mono", monospace; padding-left: 1px; background: #f0f0f0; letter-spacing: -.6px; }
.sb { height: 18px; padding: 2px 2px 0; line-height: 18px; border: 1px solid #ddd; margin-right: 2px; }
.sb-on { border-color: #222 #ddd #ddd #222; }
.sb-mono { font: 10px/18px "Liberation Mono", monospace; }
```
FILE: script.js
```js
// Smooth the traced contour polylines into Catmull-Rom curves.
document.querySelectorAll('.contours polyline').forEach(function (line) {
  var p = line.getAttribute('points').trim().split(/\s+/).map(function (s) { return s.split(',').map(Number); });
  var d = 'M' + p[0].join(' ');
  for (var i = 0; i < p.length - 1; i++) {
    var a = p[Math.max(i - 1, 0)], b = p[i], c = p[i + 1], e = p[Math.min(i + 2, p.length - 1)];
    d += 'C' + (b[0] + (c[0] - a[0]) / 6) + ' ' + (b[1] + (c[1] - a[1]) / 6) + ' ' +
      (c[0] - (e[0] - b[0]) / 6) + ' ' + (c[1] - (e[1] - b[1]) / 6) + ' ' + c[0] + ' ' + c[1];
  }
  var path = document.createElementNS('http://www.w3.org/2000/svg', 'path');
  path.setAttribute('d', d);
  line.replaceWith(path);
});
```
